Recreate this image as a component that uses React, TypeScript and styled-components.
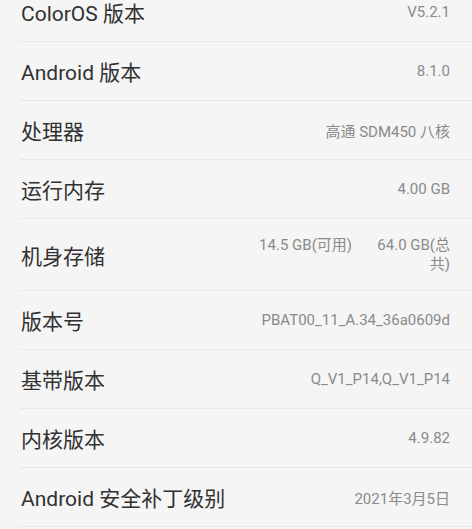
import React from "react";
import styled, { createGlobalStyle } from "styled-components";

const Global = createGlobalStyle`
  html, body {
    margin: 0;
    padding: 0;
    background: #f5f5f5;
    overflow: hidden;
  }
  body {
    font-family: Roboto, "Noto Sans CJK SC", "Noto Sans", sans-serif;
    -webkit-font-smoothing: antialiased;
  }
`;

const Page = styled.div`
  width: 472px;
  height: 529px;
  overflow: hidden;
  background: #f5f5f5;
`;

/* list scrolled so that the first row is partly hidden */
const List = styled.div`
  margin-top: -17px;
  margin-left: 20px;
  display: flex;
  flex-direction: column;
`;

const Row = styled.div<{ $tall?: boolean }>`
  height: ${(p) => (p.$tall ? 71 : 58)}px;
  display: flex;
  align-items: center;
  justify-content: space-between;
  padding: 0 22px 0 1px;
  border-bottom: 1px solid #e8e8e8;
`;

const Label = styled.span`
  font-size: 21px;
  color: #313131;
  white-space: nowrap;
  letter-spacing: 0;
`;

const Value = styled.span`
  font-size: 15px;
  color: #8a8a8a;
  white-space: nowrap;
  text-align: right;
`;

const ValueGroup = styled.div`
  display: flex;
  align-items: flex-start;
  gap: 24px;
  font-size: 15px;
  line-height: 19px;
  color: #8a8a8a;
  margin-top: 1px;
`;

const WrapValue = styled.span`
  width: 74px;
  text-align: right;
  white-space: normal;
`;

const rows: { label: string; value: string }[] = [
  { label: "ColorOS 版本", value: "V5.2.1" },
  { label: "Android 版本", value: "8.1.0" },
  { label: "处理器", value: "高通 SDM450 八核" },
  { label: "运行内存", value: "4.00 GB" },
];

const rows2: { label: string; value: string }[] = [
  { label: "版本号", value: "PBAT00_11_A.34_36a0609d" },
  { label: "基带版本", value: "Q_V1_P14,Q_V1_P14" },
  { label: "内核版本", value: "4.9.82" },
  { label: "Android 安全补丁级别", value: "2021年3月5日" },
];

export default function App() {
  return (
    <Page>
      <Global />
      <List>
        {rows.map((r) => (
          <Row key={r.label}>
            <Label>{r.label}</Label>
            <Value>{r.value}</Value>
          </Row>
        ))}
        <Row $tall>
          <Label>机身存储</Label>
          <ValueGroup>
            <span>14.5 GB(可用)</span>
            <WrapValue>64.0 GB(总共)</WrapValue>
          </ValueGroup>
        </Row>
        {rows2.map((r) => (
          <Row key={r.label}>
            <Label>{r.label}</Label>
            <Value>{r.value}</Value>
          </Row>
        ))}
      </List>
    </Page>
  );
}
